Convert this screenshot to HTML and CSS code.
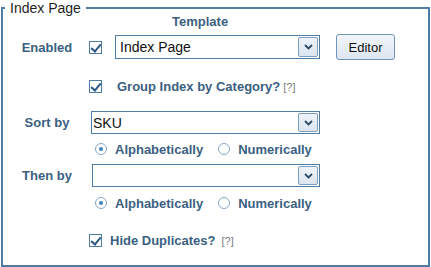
FILE: index.html
```html
<!DOCTYPE html>
<html lang="en">
<head>
  <meta charset="UTF-8" />
  <title>Index Page</title>
  <link rel="stylesheet" href="styles.css">
</head>
<body>
  <fieldset class="panel">
    <legend>Index Page</legend>

    <div class="template-head">Template</div>

    <div class="row row-enabled">
      <span class="label">Enabled</span>
      <span class="check checked"></span>
      <div class="select select-template">
        <span class="value">Index Page</span>
        <span class="arrow"><svg width="9" height="6" viewBox="0 0 9 6"><path d="M1 1l3.5 3.5L8 1" fill="none" stroke="#2d4a66" stroke-width="1.8"/></svg></span>
      </div>
      <button class="btn">Editor</button>
    </div>

    <div class="row row-check row-group">
      <span class="check checked"></span>
      <span class="text">Group Index by Category?</span>
      <span class="help">[?]</span>
    </div>

    <div class="row row-sort">
      <span class="label">Sort by</span>
      <div class="select select-wide">
        <span class="value">SKU</span>
        <span class="arrow"><svg width="9" height="6" viewBox="0 0 9 6"><path d="M1 1l3.5 3.5L8 1" fill="none" stroke="#2d4a66" stroke-width="1.8"/></svg></span>
      </div>
    </div>

    <div class="row radios">
      <span class="radio checked"></span>
      <span class="text">Alphabetically</span>
      <span class="radio"></span>
      <span class="text">Numerically</span>
    </div>

    <div class="row row-then">
      <span class="label">Then by</span>
      <div class="select select-wide">
        <span class="value"></span>
        <span class="arrow"><svg width="9" height="6" viewBox="0 0 9 6"><path d="M1 1l3.5 3.5L8 1" fill="none" stroke="#2d4a66" stroke-width="1.8"/></svg></span>
      </div>
    </div>

    <div class="row radios radios-then">
      <span class="radio checked"></span>
      <span class="text">Alphabetically</span>
      <span class="radio"></span>
      <span class="text">Numerically</span>
    </div>

    <div class="row row-check row-dup">
      <span class="check checked"></span>
      <span class="text">Hide Duplicates?</span>
      <span class="help">[?]</span>
    </div>
  </fieldset>
</body>
</html>
```

FILE: styles.css
```css
body {
  margin: 0;
  background-color: #ffffff;
  font-family: 'Liberation Sans', Arial, sans-serif;
  color: #222;
}

.panel {
  margin: 0 1px;
  padding: 0 0 16px 0;
  border: 2px solid #4f7ca6;
  height: 267px;
  box-sizing: border-box;
  min-width: 0;
}

legend {
  margin-left: 2px;
  padding: 0 5px;
  font-size: 14px;
  line-height: 16px;
  color: #1f1f1f;
}

.template-head {
  margin-top: -2px;
  font-size: 13px;
  font-weight: bold;
  line-height: 16px;
  color: #3b5f82;
  padding-left: 169px;
}

.row {
  display: flex;
  align-items: center;
}

.label {
  width: 88px;
  text-align: center;
  font-size: 13px;
  font-weight: bold;
  color: #3b5f82;
}

.text {
  font-size: 13px;
  font-weight: bold;
  color: #3b5f82;
}

.help {
  font-size: 11px;
  color: #7a7a7a;
  margin-left: 3px;
  padding-top: 2px;
}

/* checkbox */
.check {
  width: 13px;
  height: 13px;
  box-sizing: border-box;
  border: 1px solid #4f7ca6;
  background-color: #fff;
  position: relative;
  flex: none;
}

.check.checked::after {
  content: '';
  position: absolute;
  left: 3px;
  top: 0px;
  width: 4px;
  height: 8px;
  border: solid #2c5985;
  border-width: 0 2px 2px 0;
  transform: rotate(40deg);
}

/* radio */
.radio {
  width: 12px;
  height: 12px;
  box-sizing: border-box;
  border: 1px solid #86a8c9;
  border-radius: 50%;
  background-color: #fff;
  position: relative;
  flex: none;
}

.radio.checked::after {
  content: '';
  position: absolute;
  left: 3px;
  top: 3px;
  width: 4px;
  height: 4px;
  border-radius: 50%;
  background-color: #3a82c4;
}

/* select */
.select {
  display: flex;
  align-items: center;
  justify-content: space-between;
  box-sizing: border-box;
  border: 1px solid #4f7ca6;
  background-color: #fff;
  padding: 0 1px 0 4px;
}

.value {
  font-size: 14px;
  color: #111;
}

.arrow {
  width: 20px;
  height: 20px;
  box-sizing: border-box;
  border: 1px solid #7d9dc0;
  border-radius: 2px;
  background: linear-gradient(#eef3f9, #dbe5f0);
  display: flex;
  align-items: center;
  justify-content: center;
}

.row-enabled {
  margin-top: 4px;
  height: 26px;
}

.row-enabled .check {
  margin-left: -2px;
}

.select-template {
  width: 205px;
  height: 24px;
  margin-left: 13px;
}

.btn {
  margin-left: 16px;
  width: 59px;
  height: 26px;
  border: 1px solid #6f93bb;
  border-radius: 3px;
  background: linear-gradient(#f3f6fb, #dce5f0);
  font-family: 'Liberation Sans', Arial, sans-serif;
  font-size: 13px;
  color: #111;
  padding: 0;
}

.row-check {
  padding-left: 86px;
  height: 16px;
}

.row-group {
  margin-top: 18px;
}

.row-group .text {
  margin-left: 15px;
}

.row-sort,
.row-then {
  height: 23px;
}

.row-sort {
  margin-top: 17px;
}

.row-then {
  margin-top: 7px;
}

.select-wide {
  width: 229px;
  height: 23px;
  padding-left: 1px;
}

.row-then .select-wide {
  margin-left: 1px;
  width: 228px;
}

.select-wide .arrow {
  height: 19px;
}

.radios {
  padding-left: 92px;
  height: 16px;
  margin-top: 7px;
}

.radios .text {
  margin-left: 8px;
}

.radios .radio + .text + .radio {
  margin-left: 15px;
}

.radios-then {
  margin-top: 8px;
}

.row-dup {
  margin-top: 21px;
}

.row-dup .text {
  margin-left: 8px;
}

.row-dup .help {
  margin-left: 6px;
}
```
